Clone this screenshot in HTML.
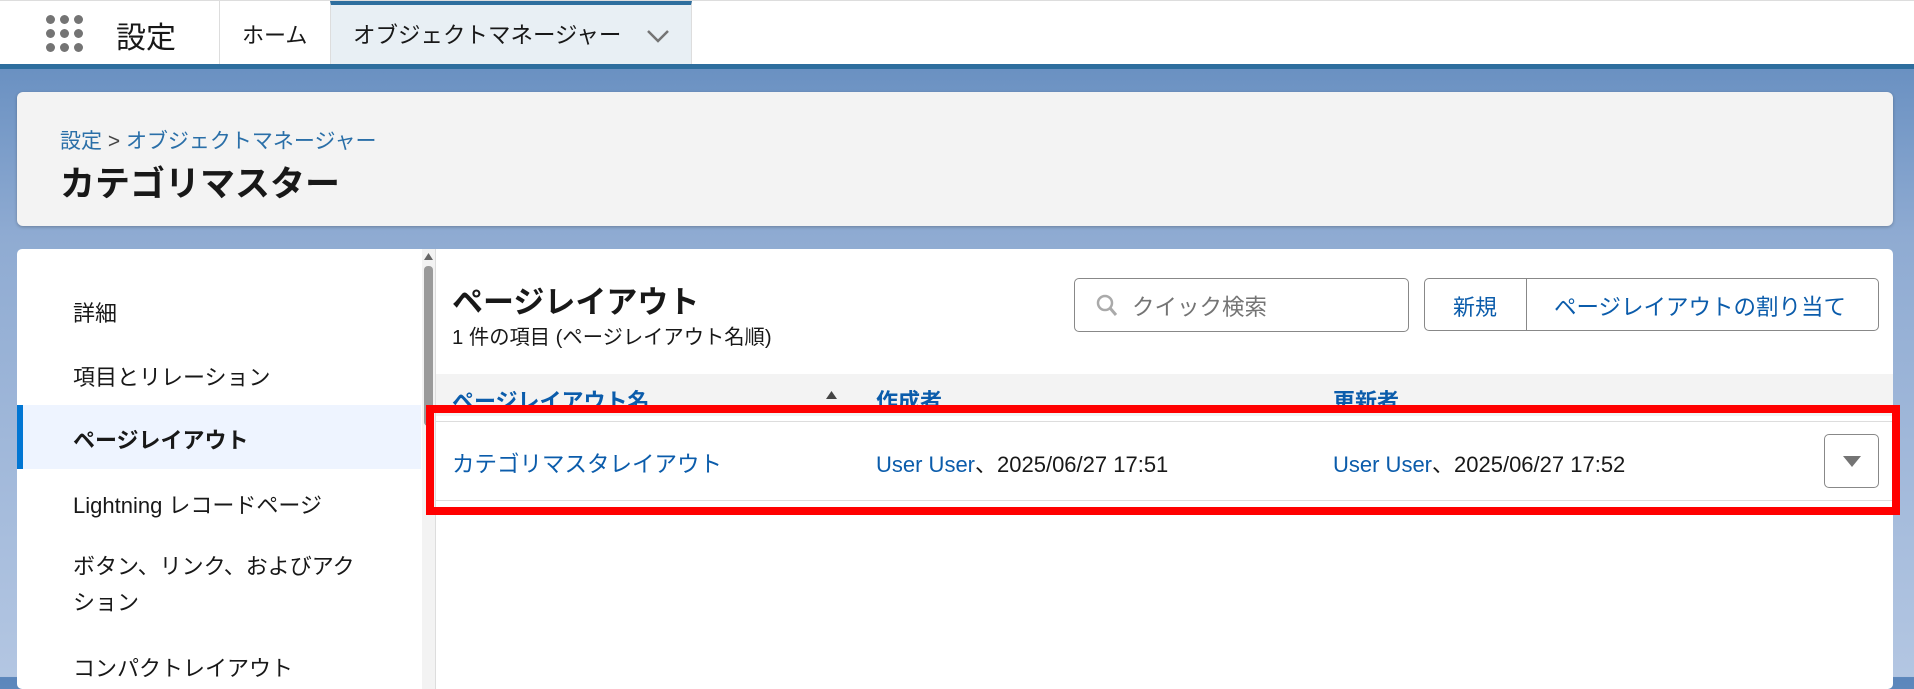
<!DOCTYPE html>
<html><head><meta charset="utf-8"><style>
*{margin:0;padding:0;box-sizing:border-box}
body{width:1914px;height:677px;overflow:hidden;position:relative;font-family:"Liberation Sans","Noto Sans CJK JP",sans-serif;color:#181818;background:linear-gradient(180deg,#5b86bb 0%,#8fabd2 35%,#b3c6e2 100%)}
.a{position:absolute;white-space:nowrap}
.nav{left:0;top:0;width:1914px;height:64px;background:#fff;border-top:1px solid #ddd}
.bar{left:0;top:64px;width:1914px;height:5px;background:#2e6e9e}
.dot{position:absolute;width:9px;height:9px;border-radius:50%;background:#747474}
.card{background:#f3f3f3;border-radius:6px;box-shadow:0 1px 3px rgba(0,0,0,.25)}
.lnk{color:#0b5cab}
.side{font-size:22px;left:73px}
</style></head><body>
<div class="a nav"></div>
<div class="a" style="left:46px;top:15px;width:40px;height:40px">
<div class="dot" style="left:0;top:0"></div><div class="dot" style="left:14px;top:0"></div><div class="dot" style="left:28px;top:0"></div>
<div class="dot" style="left:0;top:14px"></div><div class="dot" style="left:14px;top:14px"></div><div class="dot" style="left:28px;top:14px"></div>
<div class="dot" style="left:0;top:28px"></div><div class="dot" style="left:14px;top:28px"></div><div class="dot" style="left:28px;top:28px"></div>
</div>
<div class="a" style="left:116px;top:13px;font-size:30px">設定</div>
<div class="a" style="left:219px;top:1px;width:1px;height:63px;background:#ddd"></div>
<div class="a" style="left:242px;top:18px;font-size:22px">ホーム</div>
<div class="a" style="left:330px;top:1px;width:362px;height:63px;background:#e8eff4;border-top:4px solid #2e6e9e;border-left:1px solid #ddd;border-right:1px solid #ddd"></div>
<div class="a" style="left:353px;top:18px;font-size:22.5px">オブジェクトマネージャー</div>
<svg class="a" style="left:646px;top:28px" width="24" height="16" viewBox="0 0 24 16"><path d="M2 3 L12 13 L22 3" stroke="#747474" stroke-width="2.5" fill="none"/></svg>
<div class="a bar"></div>
<div class="a card" style="left:17px;top:92px;width:1876px;height:134px"></div>
<div class="a" style="left:60px;top:125px;font-size:21px;color:#444"><span style="color:#2a6fa8">設定</span> &gt; <span style="color:#2a6fa8">オブジェクトマネージャー</span></div>
<div class="a" style="left:60px;top:156px;font-size:35px;font-weight:bold">カテゴリマスター</div>
<div class="a" style="left:17px;top:249px;width:1876px;height:440px;background:#fff;border-radius:5px"></div>
<div class="a" style="left:17px;top:405px;width:404px;height:64px;background:#eef4ff"></div>
<div class="a" style="left:17px;top:405px;width:6px;height:64px;background:#0176d3"></div>
<div class="a side" style="top:296px">詳細</div>
<div class="a side" style="top:360px">項目とリレーション</div>
<div class="a side" style="top:423px;font-weight:bold">ページレイアウト</div>
<div class="a side" style="top:488px">Lightning レコードページ</div>
<div class="a side" style="top:549px;line-height:36px;white-space:normal;width:300px">ボタン、リンク、およびアクション</div>
<div class="a side" style="top:651px">コンパクトレイアウト</div>
<div class="a" style="left:422px;top:249px;width:13px;height:440px;background:#f3f3f3"></div>
<div class="a" style="left:424px;top:266px;width:9px;height:160px;background:#9a9a9a;border-radius:4px"></div>
<svg class="a" style="left:424px;top:253px" width="9" height="7"><path d="M0 7L4.5 0 9 7z" fill="#666"/></svg>
<div class="a" style="left:435px;top:249px;width:1px;height:440px;background:#ddd"></div>
<div class="a" style="left:452px;top:277px;font-size:31px;font-weight:bold">ページレイアウト</div>
<div class="a" style="left:452px;top:320px;font-size:20.3px">1 件の項目 (ページレイアウト名順)</div>
<div class="a" style="left:1074px;top:278px;width:335px;height:54px;border:1px solid #888;border-radius:5px"></div>
<svg class="a" style="left:1096px;top:294px" width="22" height="24" viewBox="0 0 22 24"><circle cx="9" cy="9" r="7" stroke="#aaa" stroke-width="2.5" fill="none"/><path d="M14 14 L20 21" stroke="#aaa" stroke-width="3"/></svg>
<div class="a" style="left:1132px;top:290px;font-size:22.5px;color:#747474">クイック検索</div>
<div class="a" style="left:1424px;top:278px;width:455px;height:53px;border:1px solid #888;border-radius:5px"></div>
<div class="a" style="left:1526px;top:278px;width:1px;height:53px;background:#888"></div>
<div class="a lnk" style="left:1453px;top:290px;font-size:22px">新規</div>
<div class="a lnk" style="left:1554px;top:290px;font-size:22.5px">ページレイアウトの割り当て</div>
<div class="a" style="left:436px;top:374px;width:1457px;height:42px;background:#f3f3f3"></div>
<div class="a lnk" style="left:452px;top:384px;font-size:22px;font-weight:bold">ページレイアウト名</div>
<svg class="a" style="left:826px;top:391px" width="11" height="8"><path d="M0 8L5.5 0 11 8z" fill="#444"/></svg>
<div class="a lnk" style="left:876px;top:384px;font-size:22px;font-weight:bold">作成者</div>
<div class="a lnk" style="left:1333px;top:384px;font-size:22px;font-weight:bold">更新者</div>
<div class="a" style="left:436px;top:421px;width:1457px;height:1px;background:#ddd"></div>
<div class="a" style="left:436px;top:500px;width:1457px;height:1px;background:#ddd"></div>
<div class="a lnk" style="left:452px;top:447px;font-size:22.5px">カテゴリマスタレイアウト</div>
<div class="a" style="left:876px;top:447px;font-size:22px"><span class="lnk">User User</span>、2025/06/27 17:51</div>
<div class="a" style="left:1333px;top:447px;font-size:22px"><span class="lnk">User User</span>、2025/06/27 17:52</div>
<div class="a" style="left:1824px;top:434px;width:55px;height:54px;border:1px solid #888;border-radius:5px"></div>
<svg class="a" style="left:1843px;top:456px" width="18" height="11"><path d="M0 0H18L9 11z" fill="#747474"/></svg>
<div class="a" style="left:426px;top:405px;width:1474px;height:110px;border:8px solid #f00"></div>
</body></html>
